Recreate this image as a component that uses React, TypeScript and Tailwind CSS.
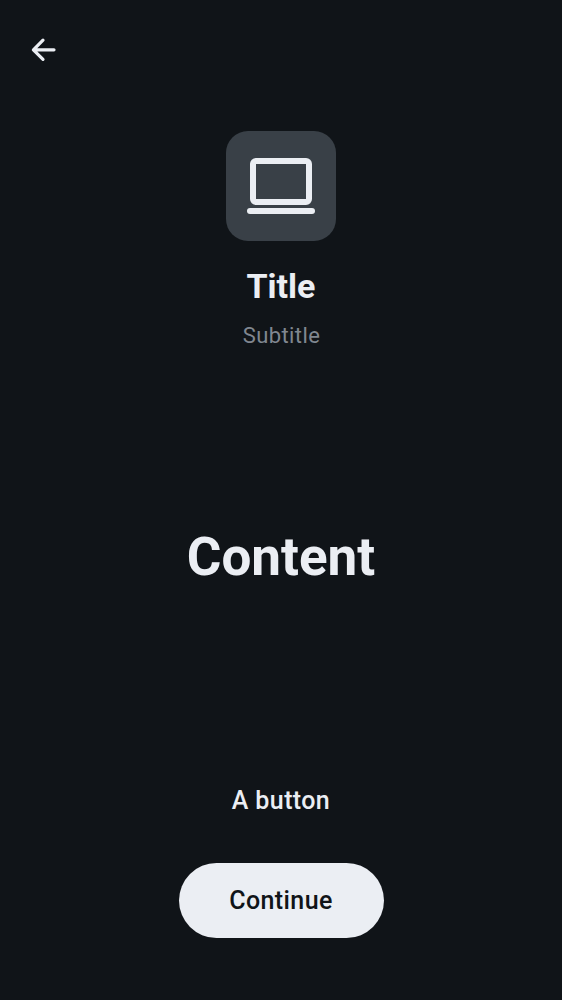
export default function App() {
  return (
    <main className="flex h-[1000px] w-full flex-col items-center bg-[#101418] font-[Roboto,sans-serif] text-[#ebeef3]">
      <header className="flex h-[131px] w-full pt-[34px] pl-[27px]">
        <button aria-label="Back" className="size-8">
          <svg viewBox="0 0 32 32" className="size-8" fill="none" stroke="currentColor" strokeWidth="3.2" strokeLinecap="round" strokeLinejoin="round">
            <path d="M27 15.8H7M16 6.2L6.4 15.8L16 25.4" />
          </svg>
        </button>
      </header>
      <div className="flex size-[109.5px] shrink-0 items-center justify-center rounded-[22px] bg-[#394047]">
        <svg viewBox="0 0 110 110" className="size-[110px] shrink-0" fill="none" stroke="currentColor" strokeWidth="6" strokeLinecap="round">
          <rect x="27" y="30" width="56" height="41" rx="3" />
          <path d="M24 80H86" />
        </svg>
      </div>
      <h1 className="mt-[23.5px] h-[44px] text-[34px] leading-[44px] font-bold">Title</h1>
      <p className="mt-[14px] h-[28px] pl-px text-[22px] leading-[28px] tracking-[0.4px] text-[#808790]">Subtitle</p>
      <section className="mt-[171px] h-[72px] text-[53px] leading-[72px] font-bold">Content</section>
      <button className="mt-[190px] h-[36px] text-[25px] leading-[36px] font-medium tracking-[0.4px]">A button</button>
      <button className="mt-[43.5px] h-[75px] w-[205px] rounded-full bg-[#ebeef3] pt-px text-[25px] font-medium tracking-[0.4px] text-[#101418]">Continue</button>
    </main>
  );
}
